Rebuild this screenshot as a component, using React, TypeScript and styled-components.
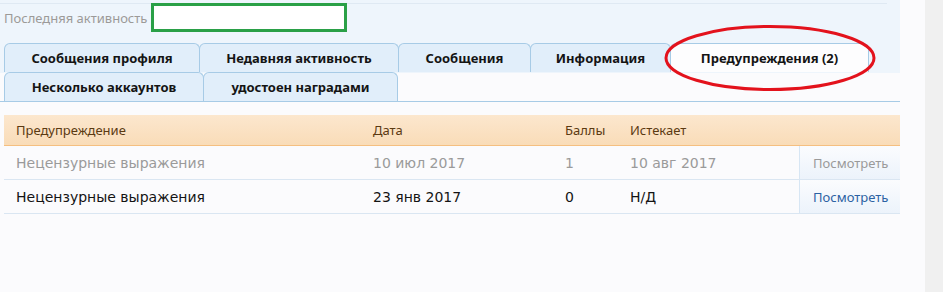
import React from "react";
import styled, { createGlobalStyle } from "styled-components";

const Global = createGlobalStyle`
  html, body { margin: 0; padding: 0; background: #fbfbfd; }
  body { font-family: "Noto Sans", "DejaVu Sans", sans-serif; }
`;

const Page = styled.div`
  display: flex;
  min-height: 292px;
  background: #fbfbfd;
`;

const Main = styled.div`
  width: 900px;
  position: relative;
`;

const SideStrip = styled.div`
  width: 18px;
  margin-left: 25px;
  background: #f0f0f0;
`;

const TopPanel = styled.div`
  background: linear-gradient(#eef5fc, #eef5fc) no-repeat 0 0 / 100% 73px;
  padding-top: 3px;
`;

const FieldRow = styled.div`
  display: flex;
  align-items: flex-start;
  border-top: 1px solid #dfe9f3;
  margin-right: 13px;
  padding-left: 4px;
  height: 39px;
`;

const Label = styled.span`
  font-family: "Noto Sans", sans-serif;
  font-size: 13px;
  color: #9c9a98;
  line-height: 29px;
  margin-right: 6px;
  width: 141px;
  white-space: nowrap;
`;

const GreenBox = styled.div`
  width: 190px;
  height: 23px;
  border: 3px solid #2aa047;
  background: #ffffff;
  margin-top: -1px;
`;

const TabList = styled.ul`
  list-style: none;
  margin: 0;
  padding: 0 0 0 4px;
  display: flex;
  flex-wrap: wrap;
  border-bottom: 1px solid #a7cbe6;
`;

const TabBreak = styled.li`
  flex-basis: 100%;
  height: 0;
`;

const Tab = styled.li<{ $w: number; $active?: boolean }>`
  box-sizing: border-box;
  width: ${(p) => p.$w}px;
  height: 29px;
  margin-right: -1px;
  border: 1px solid #a7cbe6;
  border-bottom: none;
  border-radius: 6px 6px 0 0;
  background: ${(p) => (p.$active ? "#fdfdfe" : "#e1eefa")};
  display: flex;
  align-items: center;
  justify-content: center;
  font-family: "Noto Sans", sans-serif;
  font-weight: bold;
  font-size: 13px;
  color: #141414;
  white-space: nowrap;
`;

const Table = styled.div`
  margin: 13px 0 0 4px;
`;

const Row = styled.div<{ $head?: boolean }>`
  display: grid;
  grid-template-columns: 357px 192px 65px 181px 1fr;
  height: ${(p) => (p.$head ? 30 : 33)}px;
  align-items: stretch;
  border-bottom: 1px solid ${(p) => (p.$head ? "#f5bf80" : "#dae6f2")};
  background: ${(p) => (p.$head ? "linear-gradient(#fce7ce, #f9dcb8)" : "transparent")};
`;

const HeadCell = styled.div`
  display: flex;
  align-items: center;
  padding-left: 12px;
  font-family: "Noto Sans", sans-serif;
  font-size: 13px;
  color: #5b3a12;
`;

const Cell = styled.div<{ $muted?: boolean }>`
  display: flex;
  align-items: center;
  padding-left: 12px;
  font-family: "DejaVu Sans", sans-serif;
  font-size: 14px;
  color: ${(p) => (p.$muted ? "#9a9a9a" : "#141414")};
  white-space: nowrap;
`;

const ActionCell = styled.div<{ $muted?: boolean }>`
  display: flex;
  align-items: center;
  padding-left: 13px;
  border-left: 1px solid #d7e6f4;
  background: linear-gradient(#fbfcfe, #ecf3fb);
  font-family: "Noto Sans", sans-serif;
  font-size: 13px;
  color: ${(p) => (p.$muted ? "#9a9a9a" : "#2c62a3")};
`;

const Annotation = styled.svg`
  position: absolute;
  left: 663px;
  top: 24px;
  pointer-events: none;
`;

const rows = [
  { title: "Нецензурные выражения", date: "10 июл 2017", points: "1", expires: "10 авг 2017", muted: true },
  { title: "Нецензурные выражения", date: "23 янв 2017", points: "0", expires: "Н/Д", muted: false },
];

export default function App() {
  return (
    <>
      <Global />
      <Page>
        <Main>
          <TopPanel>
            <FieldRow>
              <Label>Последняя активность</Label>
              <GreenBox />
            </FieldRow>
            <TabList>
              <Tab $w={196}>Сообщения профиля</Tab>
              <Tab $w={200}>Недавняя активность</Tab>
              <Tab $w={133}>Сообщения</Tab>
              <Tab $w={141}>Информация</Tab>
              <Tab $w={199} $active>Предупреждения (2)</Tab>
              <TabBreak />
              <Tab $w={200}>Несколько аккаунтов</Tab>
              <Tab $w={195}>удостоен наградами</Tab>
            </TabList>
          </TopPanel>
          <Table>
            <Row $head>
              <HeadCell>Предупреждение</HeadCell>
              <HeadCell>Дата</HeadCell>
              <HeadCell>Баллы</HeadCell>
              <HeadCell>Истекает</HeadCell>
              <HeadCell />
            </Row>
            {rows.map((r, i) => (
              <Row key={i}>
                <Cell $muted={r.muted}>{r.title}</Cell>
                <Cell $muted={r.muted}>{r.date}</Cell>
                <Cell $muted={r.muted}>{r.points}</Cell>
                <Cell $muted={r.muted}>{r.expires}</Cell>
                <ActionCell $muted={r.muted}>Посмотреть</ActionCell>
              </Row>
            ))}
          </Table>
          <Annotation width="214" height="70" viewBox="0 0 214 70">
            <ellipse cx="107" cy="34" rx="104" ry="31.5" fill="none" stroke="#e3121c" strokeWidth="3" />
          </Annotation>
        </Main>
        <SideStrip />
      </Page>
    </>
  );
}
